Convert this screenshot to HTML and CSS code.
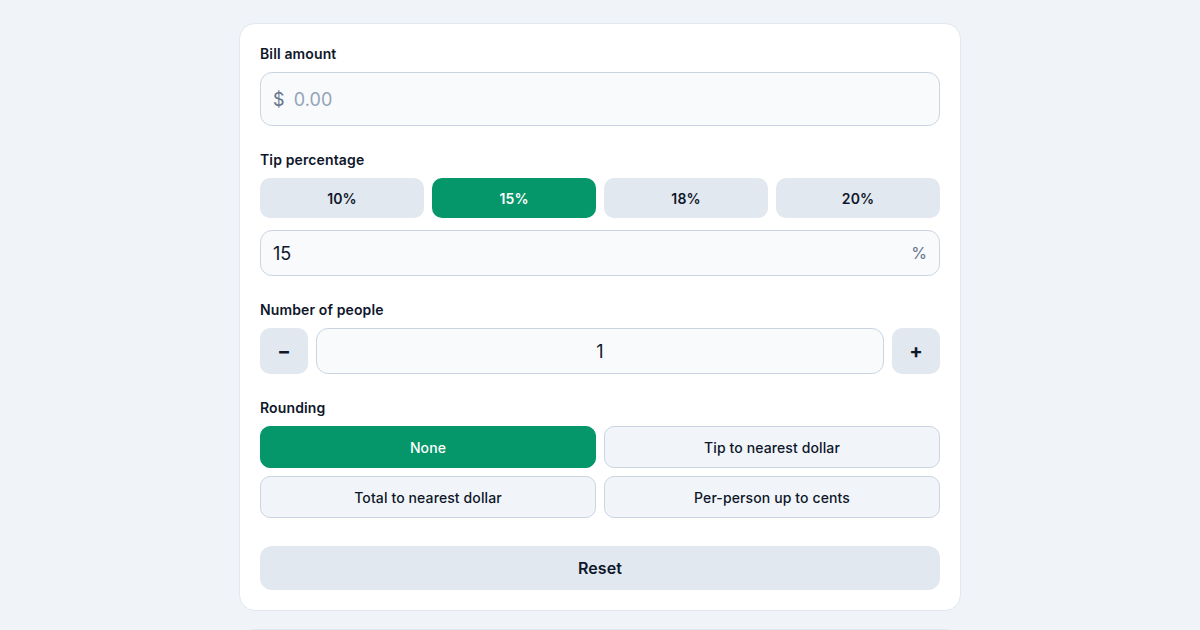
FILE: index.html
```html
<!DOCTYPE html>
<html lang="en">
<head>
<meta charset="utf-8">
<title>Tip Calculator</title>
<link rel="stylesheet" href="styles.css">
</head>
<body>
<main class="wrap">
  <section class="card">
    <div class="field">
      <label class="label">Bill amount</label>
      <div class="bill">
        <span class="cur">$</span>
        <input class="bill-input" type="text" placeholder="0.00">
      </div>
    </div>

    <div class="field">
      <label class="label">Tip percentage</label>
      <div class="tips">
        <button class="tip">10%</button>
        <button class="tip active">15%</button>
        <button class="tip">18%</button>
        <button class="tip">20%</button>
      </div>
      <div class="custom">
        <input class="custom-input" type="text" value="15">
        <span class="pct">%</span>
      </div>
    </div>

    <div class="field">
      <label class="label">Number of people</label>
      <div class="stepper">
        <button class="step">&minus;</button>
        <input class="people" type="text" value="1">
        <button class="step">+</button>
      </div>
    </div>

    <div class="field">
      <label class="label">Rounding</label>
      <div class="rounding">
        <button class="opt active">None</button>
        <button class="opt">Tip to nearest dollar</button>
        <button class="opt">Total to nearest dollar</button>
        <button class="opt">Per-person up to cents</button>
      </div>
    </div>

    <button class="reset">Reset</button>
  </section>
  <section class="card next"></section>
</main>
</body>
</html>
```

FILE: styles.css
```css
* { box-sizing: border-box; }
html, body { margin: 0; padding: 0; }
body {
  background: #f0f3f8;
  font-family: Inter, "Noto Sans", sans-serif;
  color: #0f172a;
  overflow: hidden;
  height: 630px;
  letter-spacing: 0.008em;
}
.wrap {
  width: 722px;
  margin: 23px auto 0;
  display: flex;
  flex-direction: column;
  gap: 18px;
}
.card {
  background: #ffffff;
  border: 1px solid #e2e8f0;
  border-radius: 16px;
  padding: 20px;
  display: flex;
  flex-direction: column;
}
.card.next { height: 40px; }
.field {
  display: flex;
  flex-direction: column;
  margin-bottom: 24px;
}
.label {
  font-size: 14px;
  font-weight: 600;
  line-height: 20px;
  color: #0f172a;
  margin-bottom: 8px;
}
.bill {
  height: 54px;
  border: 1px solid #cbd5e1;
  border-radius: 12px;
  background: #f8fafc;
  display: flex;
  align-items: center;
  padding: 0 12px;
  gap: 9px;
}
.cur {
  font-size: 18px;
  color: #64748b;
}
.bill-input {
  border: none;
  background: transparent;
  font-family: inherit;
  font-size: 18px;
  letter-spacing: 0.008em;
  color: #0f172a;
  outline: none;
  flex: 1;
  padding: 0;
}
.bill-input::placeholder { color: #94a3b8; }
.tips {
  display: grid;
  grid-template-columns: repeat(4, 1fr);
  gap: 8px;
  margin-bottom: 12px;
}
button {
  font-family: inherit;
  letter-spacing: 0.008em;
  cursor: pointer;
}
.tip {
  height: 40px;
  border: none;
  border-radius: 10px;
  background: #e2e8f0;
  color: #0f172a;
  font-size: 14px;
  font-weight: 600;
}
.tip.active, .opt.active {
  background: #059669;
  color: #ffffff;
  border-color: #059669;
}
.custom {
  height: 46px;
  border: 1px solid #cbd5e1;
  border-radius: 12px;
  background: #f8fafc;
  display: flex;
  align-items: center;
  padding: 0 12px;
}
.custom-input {
  flex: 1;
  border: none;
  background: transparent;
  font-family: inherit;
  font-size: 18px;
  color: #0f172a;
  outline: none;
  padding: 0;
}
.pct {
  font-size: 16px;
  color: #64748b;
}
.stepper {
  display: flex;
  gap: 8px;
  height: 46px;
}
.step {
  width: 48px;
  border: none;
  border-radius: 10px;
  background: #e2e8f0;
  color: #0f172a;
  font-size: 20px;
  font-weight: 700;
}
.people {
  flex: 1;
  min-width: 0;
  border: 1px solid #cbd5e1;
  border-radius: 12px;
  background: #f8fafc;
  text-align: center;
  font-family: inherit;
  font-size: 18px;
  color: #0f172a;
  outline: none;
}
.rounding {
  display: grid;
  grid-template-columns: 1fr 1fr;
  gap: 8px;
}
.opt {
  height: 42px;
  border: 1px solid #cbd5e1;
  border-radius: 10px;
  background: #f1f5f9;
  color: #0f172a;
  font-size: 14px;
  font-weight: 500;
}
.reset {
  margin-top: 4px;
  height: 44px;
  border: none;
  border-radius: 12px;
  background: #e2e8f0;
  color: #0f172a;
  font-size: 16px;
  font-weight: 600;
}
```
